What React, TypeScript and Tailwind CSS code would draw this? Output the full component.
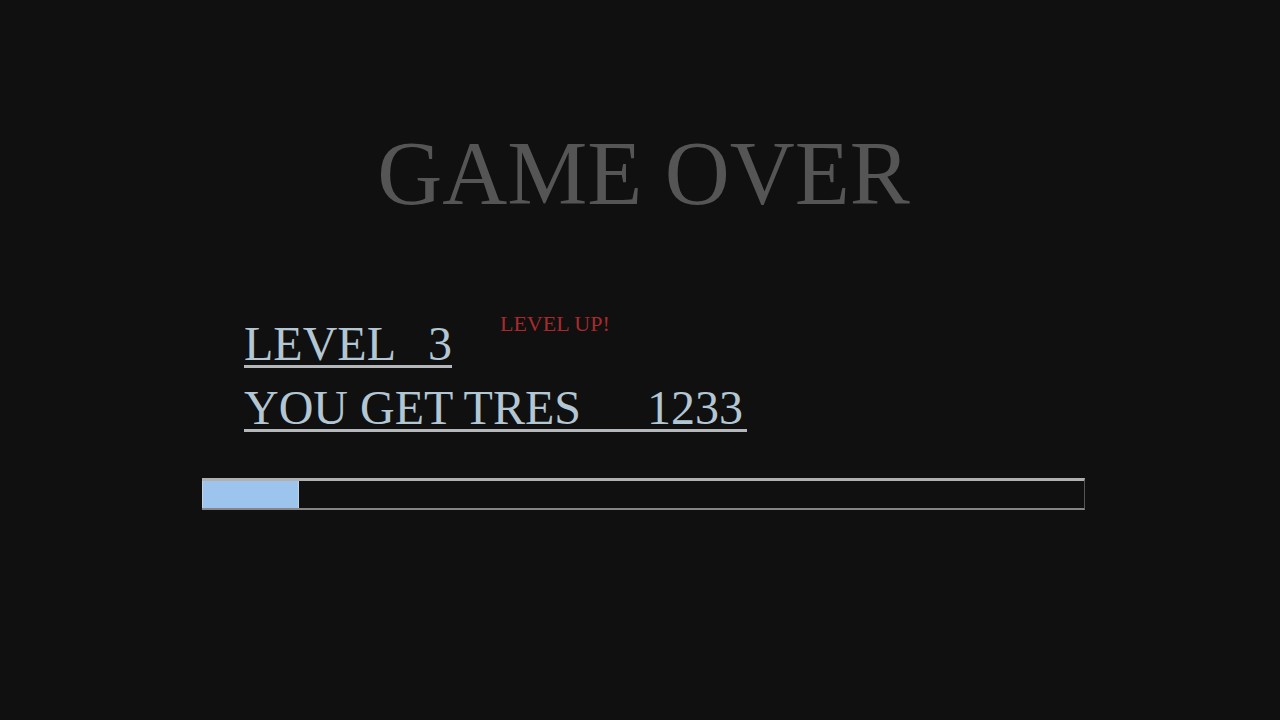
import clsx from 'clsx';

const result = {
  level: 3,
  tres: 1233,
  leveledUp: true,
  progress: 11,
};

function ResultLine({ label, value, className }: { label: string; value: number; className?: string }) {
  return (
    <p
      className={clsx(
        'flex h-16 w-fit items-end border-b-3 border-[#b4b8ba] text-5xl leading-[42px] whitespace-nowrap text-[#b3c6d3]',
        className,
      )}
    >
      <span>{label}</span>
      <span>{value}</span>
    </p>
  );
}

function ExpBar({ percent }: { percent: number }) {
  return (
    <div
      role="progressbar"
      aria-label="Experience"
      aria-valuenow={percent}
      aria-valuemin={0}
      aria-valuemax={100}
      className="h-8 border-t-3 border-r border-b-2 border-t-[#b0b0b0] border-r-[#555555] border-b-[#858585]"
    >
      <div className="h-full border-x border-[#c3d3e2] bg-[#9dc4ec]" style={{ width: `${percent}%` }} />
    </div>
  );
}

export default function App() {
  return (
    <main className="min-h-screen bg-[#101010] pt-[118px] pr-[195px] pl-[202px] font-['Liberation_Serif',serif]">
      <h1 className="text-center text-[90px] leading-[112px] whitespace-nowrap text-[#555555]">GAME OVER</h1>

      <section className="mt-[74px] pl-[42px]">
        <div className="flex items-start gap-12">
          <ResultLine label="LEVEL" value={result.level} className="gap-8" />
          {result.leveledUp && (
            <span className="mt-2 text-[22px] leading-6 text-[#a82a2c]">LEVEL UP!</span>
          )}
        </div>
        <ResultLine label="YOU GET TRES" value={result.tres} className="gap-[66px] pr-1" />
      </section>

      <div className="mt-[46px]">
        <ExpBar percent={result.progress} />
      </div>
    </main>
  );
}
